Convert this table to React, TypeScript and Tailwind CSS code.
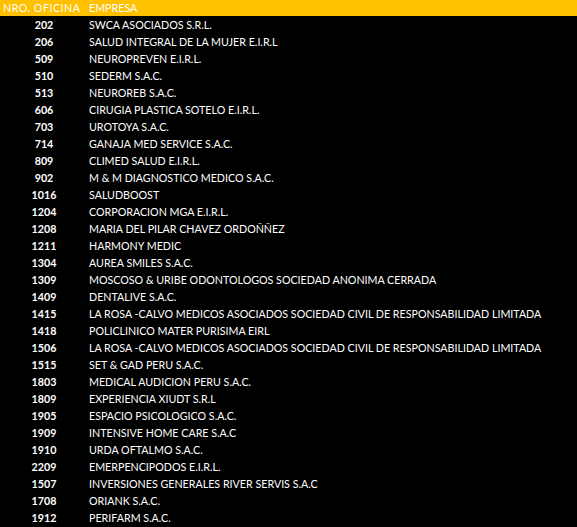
import React from "react";

const rows: [string, string][] = [
  ["202", "SWCA ASOCIADOS S.R.L."],
  ["206", "SALUD INTEGRAL DE LA MUJER E.I.R.L"],
  ["509", "NEUROPREVEN E.I.R.L."],
  ["510", "SEDERM S.A.C."],
  ["513", "NEUROREB S.A.C."],
  ["606", "CIRUGIA PLASTICA SOTELO E.I.R.L."],
  ["703", "UROTOYA S.A.C."],
  ["714", "GANAJA MED SERVICE S.A.C."],
  ["809", "CLIMED SALUD E.I.R.L."],
  ["902", "M & M DIAGNOSTICO MEDICO S.A.C."],
  ["1016", "SALUDBOOST"],
  ["1204", "CORPORACION MGA E.I.R.L."],
  ["1208", "MARIA DEL PILAR CHAVEZ ORDOÑÑEZ"],
  ["1211", "HARMONY MEDIC"],
  ["1304", "AUREA SMILES S.A.C."],
  ["1309", "MOSCOSO & URIBE ODONTOLOGOS SOCIEDAD ANONIMA CERRADA"],
  ["1409", "DENTALIVE S.A.C."],
  ["1415", "LA ROSA -CALVO MEDICOS ASOCIADOS SOCIEDAD CIVIL DE RESPONSABILIDAD LIMITADA"],
  ["1418", "POLICLINICO MATER PURISIMA EIRL"],
  ["1506", "LA ROSA -CALVO MEDICOS ASOCIADOS SOCIEDAD CIVIL DE RESPONSABILIDAD LIMITADA"],
  ["1515", "SET & GAD PERU S.A.C."],
  ["1803", "MEDICAL AUDICION PERU S.A.C."],
  ["1809", "EXPERIENCIA XIUDT S.R.L"],
  ["1905", "ESPACIO PSICOLOGICO S.A.C."],
  ["1909", "INTENSIVE HOME CARE S.A.C"],
  ["1910", "URDA OFTALMO S.A.C."],
  ["2209", "EMERPENCIPODOS E.I.R.L."],
  ["1507", "INVERSIONES GENERALES RIVER SERVIS S.A.C"],
  ["1708", "ORIANK S.A.C."],
  ["1912", "PERIFARM S.A.C."],
];

export default function App() {
  return (
    <div
      className="w-[577px] h-[527px] bg-black text-white overflow-hidden text-[10.7px]"
      style={{ fontFamily: "Lato, 'Open Sans', sans-serif" }}
    >
      <div className="flex h-[16px] items-center bg-[#ffc000] leading-none pt-[1px]">
        <div className="w-[89px] pl-[3px] tracking-[0.5px]">NRO. OFICINA</div>
        <div>EMPRESA</div>
      </div>
      {rows.map(([n, e], i) => (
        <div key={i} className="flex h-[17px] items-center leading-none pt-[2px]">
          <div className="w-[88px] text-center font-bold">{n}</div>
          <div className="pl-[1px] whitespace-nowrap">{e}</div>
        </div>
      ))}
    </div>
  );
}
